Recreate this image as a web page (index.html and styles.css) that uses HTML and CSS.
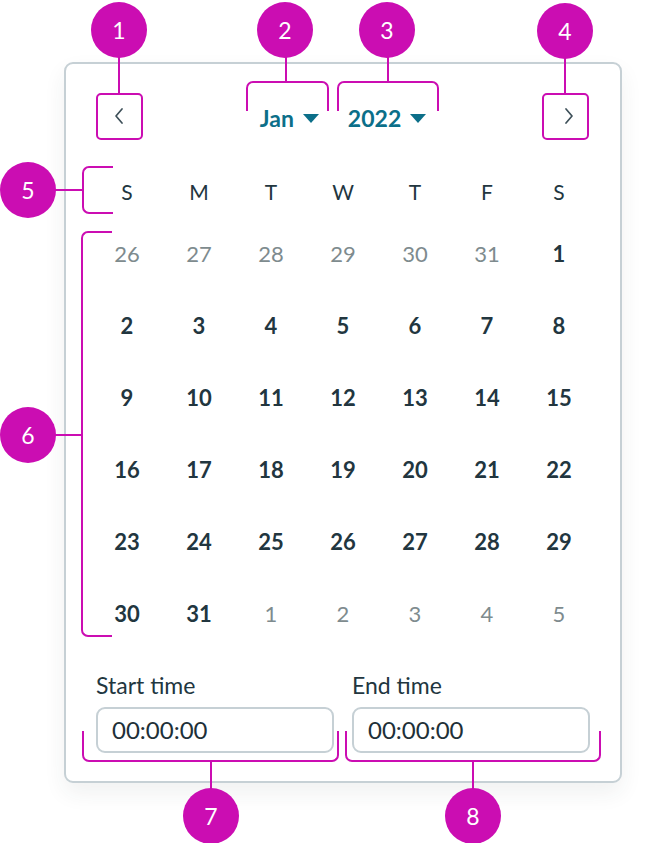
FILE: index.html
```html
<!DOCTYPE html>
<html lang="en">
<head>
  <meta charset="UTF-8" />
  <meta name="viewport" content="width=device-width, initial-scale=1.0" />
  <title>Date picker anatomy</title>
  <link rel="stylesheet" href="styles.css">
</head>
<body>
  <div class="stage">
    <div class="picker">
      <div class="picker-head">
        <button class="nav-btn" aria-label="Previous month">
          <svg width="14" height="18" viewBox="0 0 14 18"><polyline points="10,2 4,9 10,16" /></svg>
        </button>
        <div class="selects">
          <span class="select">Jan <i class="caret"></i></span>
          <span class="select">2022 <i class="caret"></i></span>
        </div>
        <button class="nav-btn next" aria-label="Next month">
          <svg width="14" height="18" viewBox="0 0 14 18"><polyline points="4,2 10,9 4,16" /></svg>
        </button>
      </div>

      <div class="weekdays">
        <span>S</span><span>M</span><span>T</span><span>W</span><span>T</span><span>F</span><span>S</span>
      </div>

      <div class="days" id="days"></div>

      <div class="times">
        <label class="time-field">
          <span class="time-label">Start time</span>
          <span class="time-input">00:00:00</span>
        </label>
        <label class="time-field">
          <span class="time-label">End time</span>
          <span class="time-input">00:00:00</span>
        </label>
      </div>
    </div>

    <!-- numbered callouts -->
    <div class="callouts">
      <div class="box box-prev"></div>
      <div class="box box-next"></div>
      <div class="bracket br-top br-month"></div>
      <div class="bracket br-top br-year"></div>
      <div class="bracket br-left br-week"></div>
      <div class="bracket br-left br-days"></div>
      <div class="bracket br-bottom br-start"></div>
      <div class="bracket br-bottom br-end"></div>

      <div class="stem v s1"></div>
      <div class="stem v s2"></div>
      <div class="stem v s3"></div>
      <div class="stem v s4"></div>
      <div class="stem h s5"></div>
      <div class="stem h s6"></div>
      <div class="stem v s7"></div>
      <div class="stem v s8"></div>

      <span class="pin p1">1</span>
      <span class="pin p2">2</span>
      <span class="pin p3">3</span>
      <span class="pin p4">4</span>
      <span class="pin p5">5</span>
      <span class="pin p6">6</span>
      <span class="pin p7">7</span>
      <span class="pin p8">8</span>
    </div>
  </div>

  <script>
    // January 2022, starting on Sunday 26 Dec
    const days = document.getElementById('days');
    const cells = [];
    [26, 27, 28, 29, 30, 31].forEach(d => cells.push({ d, out: true }));
    for (let d = 1; d <= 31; d++) cells.push({ d, out: false });
    for (let d = 1; cells.length < 42; d++) cells.push({ d, out: true });

    cells.forEach(c => {
      const span = document.createElement('span');
      span.className = c.out ? 'day out' : 'day';
      span.textContent = c.d;
      days.appendChild(span);
    });
  </script>
</body>
</html>
```

FILE: styles.css
```css
body {
  margin: 0;
  background: #fff;
  font-family: Lato, 'Open Sans', sans-serif;
  color: #22363f;
}
.stage {
  position: relative;
  width: 647px;
  height: 843px;
  padding: 62px 0 0 64px;
  box-sizing: border-box;
}

.picker {
  width: 558px;
  box-sizing: border-box;
  border: 2px solid #c6d0d5;
  border-radius: 9px;
  padding: 29px 30px 28px 30px;
  background: #fff;
  box-shadow: 0 10px 22px rgba(40, 50, 60, 0.07);
}

.picker-head {
  display: flex;
  align-items: center;
  justify-content: space-between;
  height: 46px;
}
.nav-btn {
  width: 46px;
  height: 46px;
  padding: 0;
  border: none;
  background: none;
  display: flex;
  align-items: center;
  justify-content: center;
}
.nav-btn.next { padding-left: 5px; }
.nav-btn svg polyline {
  fill: none;
  stroke: #3e5059;
  stroke-width: 1.7;
  stroke-linecap: round;
  stroke-linejoin: round;
}
.selects {
  display: flex;
  gap: 29px;
  padding-top: 4px;
}
.select {
  display: flex;
  align-items: center;
  gap: 9px;
  font-size: 23px;
  font-weight: 700;
  color: #0c6f89;
}
.caret {
  width: 0;
  height: 0;
  border-left: 8px solid transparent;
  border-right: 8px solid transparent;
  border-top: 9px solid #0c6f89;
}

.weekdays,
.days {
  display: grid;
  grid-template-columns: repeat(7, 72px);
  margin: 0 -5px;
  text-align: center;
}
.weekdays {
  margin-top: 28px;
  height: 48px;
  align-items: center;
  font-size: 21px;
}
.days {
  margin-top: 2px;
  grid-auto-rows: 72px;
  align-items: center;
  font-size: 22px;
  font-weight: 700;
}
.day.out {
  font-weight: 400;
  color: #7e8b8e;
}

.times {
  display: flex;
  gap: 18px;
  margin-top: 24px;
}
.time-field {
  flex: 1;
  display: flex;
  flex-direction: column;
  gap: 10px;
}
.time-label {
  font-size: 23px;
  line-height: 24px;
}
.time-input {
  height: 46px;
  box-sizing: border-box;
  border: 2px solid #c6d0d5;
  border-radius: 9px;
  padding: 0 14px 2px;
  display: flex;
  align-items: center;
  font-size: 24px;
  color: #1e3038;
}

/* callout layer */
.callouts {
  position: absolute;
  inset: 0;
  pointer-events: none;
}
.box,
.bracket,
.stem,
.pin {
  position: absolute;
  box-sizing: border-box;
}
.box {
  border: 2px solid #cb0db2;
  border-radius: 5px;
  width: 47px;
  height: 47px;
  top: 93px;
}
.box-prev { left: 96px; }
.box-next { left: 542px; }

.bracket { border: 2px solid #cb0db2; }
.br-top { border-bottom: none; border-radius: 7px 7px 0 0; top: 81px; height: 30px; }
.br-month { left: 246px; width: 83px; }
.br-year { left: 337px; width: 102px; }
.br-left { border-right: none; border-radius: 7px 0 0 7px; width: 31px; }
.br-week { left: 82px; top: 166px; height: 48px; }
.br-days { left: 81px; top: 231px; height: 406px; }
.br-bottom { border-top: none; border-radius: 0 0 7px 7px; top: 731px; height: 31px; }
.br-start { left: 82px; width: 257px; }
.br-end { left: 345px; width: 256px; }

.stem { background: #cb0db2; }
.stem.v { width: 2px; }
.stem.h { height: 2px; left: 50px; width: 33px; }
.s1 { left: 118px; top: 50px; height: 44px; }
.s2 { left: 285px; top: 50px; height: 32px; }
.s3 { left: 387px; top: 50px; height: 32px; }
.s4 { left: 564px; top: 50px; height: 44px; }
.s5 { top: 189px; }
.s6 { top: 434px; }
.s7 { left: 210px; top: 760px; height: 34px; }
.s8 { left: 472px; top: 760px; height: 34px; }

.pin {
  width: 56px;
  height: 56px;
  border-radius: 50%;
  background: #cb0db2;
  color: #fff;
  font-size: 23px;
  display: flex;
  align-items: center;
  justify-content: center;
}
.p1 { left: 91px; top: 2px; }
.p2 { left: 257px; top: 2px; }
.p3 { left: 359px; top: 2px; }
.p4 { left: 537px; top: 3px; }
.p5 { left: 0; top: 162px; }
.p6 { left: 0; top: 407px; }
.p7 { left: 183px; top: 788px; }
.p8 { left: 445px; top: 788px; }
```
